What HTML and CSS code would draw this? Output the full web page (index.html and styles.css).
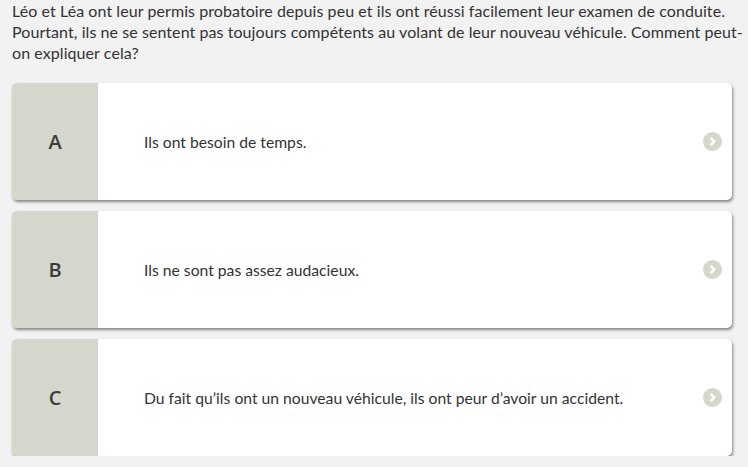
FILE: index.html
```html
<!DOCTYPE html>
<html lang="fr">
<head>
    <meta charset="UTF-8">
    <title>Question</title>
    <link rel="stylesheet" href="styles.css">
</head>
<body>
    <div class="quiz">
        <p class="question">Léo et Léa ont leur permis probatoire depuis peu et ils ont réussi facilement leur examen de conduite. Pourtant, ils ne se sentent pas toujours compétents au volant de leur nouveau véhicule. Comment peut-on expliquer cela?</p>
        <div class="answers">
            <div class="answer">
                <div class="letter">A</div>
                <div class="label">Ils ont besoin de temps.</div>
                <span class="arrow"><svg width="19" height="19" viewBox="0 0 18 18"><circle cx="9" cy="9" r="9" fill="#d5d7cd"/><path d="M7.3 5.6 L10.7 9 L7.3 12.4" fill="none" stroke="#fff" stroke-width="2.4"/></svg></span>
            </div>
            <div class="answer">
                <div class="letter">B</div>
                <div class="label">Ils ne sont pas assez audacieux.</div>
                <span class="arrow"><svg width="19" height="19" viewBox="0 0 18 18"><circle cx="9" cy="9" r="9" fill="#d5d7cd"/><path d="M7.3 5.6 L10.7 9 L7.3 12.4" fill="none" stroke="#fff" stroke-width="2.4"/></svg></span>
            </div>
            <div class="answer">
                <div class="letter">C</div>
                <div class="label">Du fait qu’ils ont un nouveau véhicule, ils ont peur d’avoir un accident.</div>
                <span class="arrow"><svg width="19" height="19" viewBox="0 0 18 18"><circle cx="9" cy="9" r="9" fill="#d5d7cd"/><path d="M7.3 5.6 L10.7 9 L7.3 12.4" fill="none" stroke="#fff" stroke-width="2.4"/></svg></span>
            </div>
        </div>
    </div>
</body>
</html>
```
FILE: styles.css
```css
body {
    margin: 0;
    background: #f2f2f2;
    font-family: Lato, "Open Sans", sans-serif;
    color: #333;
}

.quiz {
    padding: 0 16px 0 12px;
}

.question {
    margin: 0 -16px 0 0;
    font-size: 16px;
    line-height: 21px;
    letter-spacing: 0.07px;
    color: #333;
}

.answers {
    margin-top: 20px;
    display: flex;
    flex-direction: column;
    gap: 11px;
}

.answer {
    display: flex;
    align-items: center;
    height: 117px;
    background: #fff;
    border-radius: 5px;
    overflow: hidden;
    box-shadow: 1px 2px 3px rgba(0, 0, 0, 0.45);
}

.letter {
    width: 86px;
    align-self: stretch;
    display: flex;
    align-items: center;
    justify-content: center;
    background: #d5d7cd;
    font-family: "Open Sans", sans-serif;
    font-size: 20px;
    font-weight: 600;
    color: #3c3c3c;
}

.label {
    flex: 1;
    padding-left: 46px;
    font-size: 15.7px;
    color: #333;
}

.arrow {
    display: flex;
    margin-right: 10px;
}
```
